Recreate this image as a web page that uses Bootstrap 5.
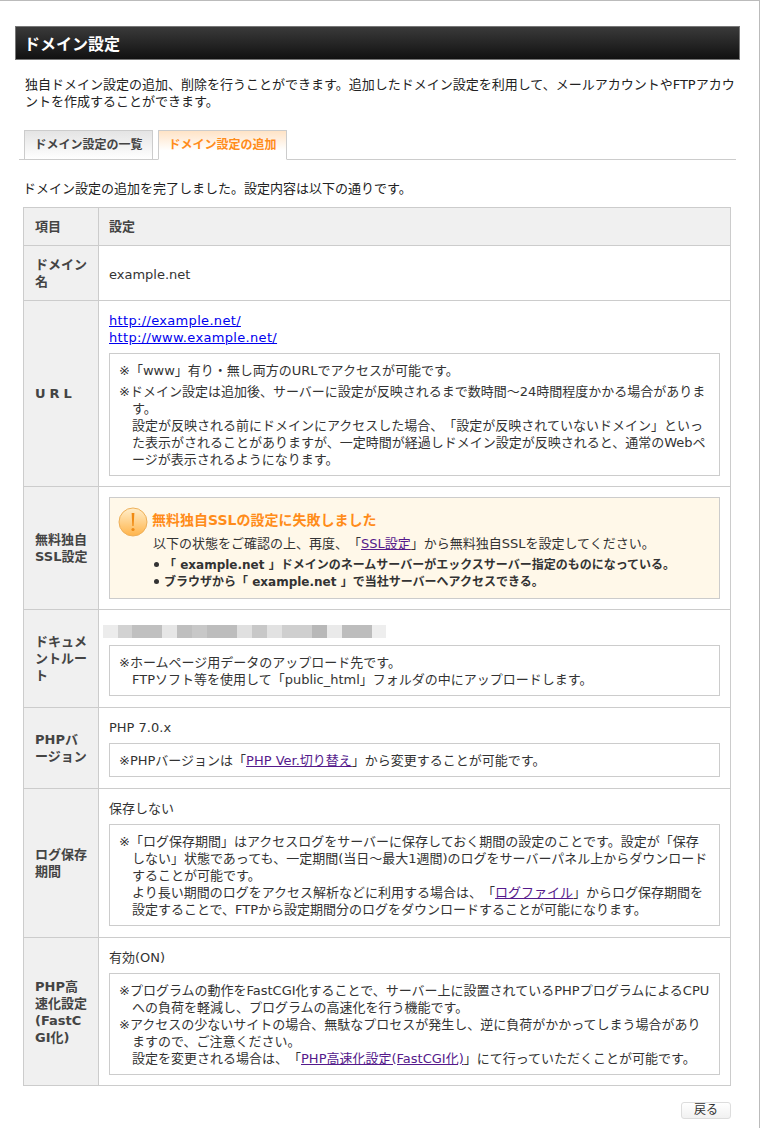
<!DOCTYPE html>
<html lang="ja">
<head>
    <meta charset="UTF-8">
    <title>ドメイン設定</title>
    <link href="https://cdn.jsdelivr.net/npm/bootstrap@5.3.3/dist/css/bootstrap.min.css" rel="stylesheet">
    <style>
        body { font-family: "DejaVu Sans", "Noto Sans CJK JP", sans-serif; font-size: 13px; line-height: 17px; color: #333; background: #fff; text-spacing-trim: space-all; }
        a { color: #00e; }
        a.visited { color: #551a8b; }
        a.url { letter-spacing: .33px; }
        .page { height: 1128px; border-top: 1px solid #bbb; border-right: 1px solid #bbb; padding: 25px 19px 0 15px; }
        .page-title { height: 34px; margin: 0; padding: 0 8px; font-size: 16px; line-height: 35px; font-weight: bold; color: #fff; border: 1px solid #777; background: linear-gradient(#3a3a3a, #111); }
        .intro { margin: 16px 0 0; padding: 0 4px 0 10px; color: #222; }
        .nav-tabs { margin: 20px 4px 0; padding-left: 5px; gap: 5px; border-bottom: 1px solid #ccc; --bs-nav-tabs-border-radius: 0; }
        .nav-tabs .nav-link { width: 129px; height: 30px; margin: 0 0 -1px; padding: 6px 0 0; text-align: center; font-size: 12px; font-weight: bold; color: #444; border: 1px solid #ccc; border-bottom-color: #ccc; background: linear-gradient(#e4e4e4, #fff); }
        .nav-tabs .nav-link.active { color: #ff8c1a; border-color: #ccc #ccc #fff; background: linear-gradient(#ffe3c6, #fff 70%); }
        .done { margin: 20px 0 10px 8px; color: #222; }
        .conf { width: 708px; margin: 0 0 0 8px; table-layout: fixed; --bs-table-border-color: #ccc; --bs-table-color: #333; border-color: #ccc; }
        .conf th { width: 75px; padding: 10px 10px 10px 11px; vertical-align: middle; font-weight: bold; color: #444; background: #f0f0f0; word-break: break-all; }
        .conf td { padding: 11px 10px 10px; vertical-align: middle; font-size: 13px; }
        .conf thead th, .conf thead td { height: 38px; background: #f0f0f0; font-weight: bold; color: #444; padding-top: 0; padding-bottom: 0; }
        .conf td.name-cell { padding-top: 13px; }
        .conf td.ssl-cell { padding-top: 10px; }
        .conf td.doc-cell, .conf td.php-cell, .conf td.log-cell { padding-bottom: 11px; }
        .spaced { letter-spacing: 4px; }
        .note { margin-top: 7px; padding: 8px 9px 7px; border: 1px solid #ccc; }
        .note p { margin: 0; padding-left: 13px; text-indent: -13px; }
        .note p + p.gap { margin-top: 4px; }
        .note p.cont { text-indent: 0; }
        .warn { padding: 9px 9px 7px 8px; background: #fff8e9; border: 1px solid #ccc; }
        .warn-icon { flex: none; width: 30px; height: 30px; }
        .warn-title { margin: 5px 0 0; font-size: 14px; line-height: 17px; font-weight: bold; color: #ff8c1a; }
        .warn-body { margin: -2px 0 0 35px; }
        .warn ul { margin: 5px 0 0 35px; padding: 0; list-style: none; font-size: 12px; font-weight: bold; }
        .warn li::before { content: ""; display: inline-block; width: 5px; height: 5px; margin: 0 5px 2px 1px; border-radius: 50%; background: #333; }
        .blur { width: 283px; height: 13px; margin: 4px 0 0 -6px; background: linear-gradient(90deg, #ececec 0 15px, #d2d2d2 15px 29px, #c0c0c0 29px 59px, #e6e6e6 59px 74px, #bfbfbf 74px 89px, #c8c8c8 89px 104px, #bdbdbd 104px 134px, #e0e0e0 134px 149px, #c8c8c8 149px 164px, #e2e2e2 164px 179px, #cfcfcf 179px 209px, #b8b8b8 209px 224px, #eaeaea 224px 239px, #bdbdbd 239px 269px, #eeeeee 269px 283px); }
        .back { margin: 15px 0 0 666px; }
        .back .btn { width: 50px; height: 17px; padding: 0; font-size: 12px; line-height: 15px; color: #333; background: linear-gradient(#fff, #f1f1f1); border: 1px solid #ddd; border-radius: 3px; }
    </style>
</head>
<body>
<div class="page">
    <h1 class="page-title">ドメイン設定</h1>
    <p class="intro">独自ドメイン設定の追加、削除を行うことができます。追加したドメイン設定を利用して、メールアカウントやFTPアカウントを作成することができます。</p>

    <ul class="nav nav-tabs">
        <li class="nav-item"><a class="nav-link" href="#">ドメイン設定の一覧</a></li>
        <li class="nav-item"><a class="nav-link active" href="#">ドメイン設定の追加</a></li>
    </ul>

    <p class="done">ドメイン設定の追加を完了しました。設定内容は以下の通りです。</p>

    <table class="table table-bordered conf">
        <thead>
        <tr><th>項目</th><td>設定</td></tr>
        </thead>
        <tbody>
        <tr>
            <th>ドメイン名</th>
            <td class="name-cell">example.net</td>
        </tr>
        <tr>
            <th class="spaced">URL</th>
            <td>
                <a class="url" href="#">http://example.net/</a><br>
                <a class="url" href="#">http://www.example.net/</a>
                <div class="note">
                    <p>※「www」有り・無し両方のURLでアクセスが可能です。</p>
                    <p class="gap">※ドメイン設定は追加後、サーバーに設定が反映されるまで数時間〜24時間程度かかる場合があります。</p>
                    <p class="cont">設定が反映される前にドメインにアクセスした場合、「設定が反映されていないドメイン」といった表示がされることがありますが、一定時間が経過しドメイン設定が反映されると、通常のWebページが表示されるようになります。</p>
                </div>
            </td>
        </tr>
        <tr>
            <th>無料独自SSL設定</th>
            <td class="ssl-cell">
                <div class="warn">
                    <div class="d-flex align-items-start gap-1">
                        <svg class="warn-icon" viewBox="0 0 30 30">
                            <defs><linearGradient id="wg" x1="0" y1="0" x2="0" y2="1"><stop offset="0" stop-color="#ffeecb"/><stop offset="1" stop-color="#ffb44a"/></linearGradient></defs>
                            <circle cx="15" cy="15" r="14" fill="url(#wg)" stroke="#eeb05a"/>
                            <path d="M13.6 6h2.8l-.8 13h-1.2z" fill="#f08a12"/>
                            <circle cx="15" cy="22.5" r="1.6" fill="#f08a12"/>
                        </svg>
                        <p class="warn-title">無料独自SSLの設定に失敗しました</p>
                    </div>
                    <p class="warn-body">以下の状態をご確認の上、再度、「<a class="visited" href="#">SSL設定</a>」から無料独自SSLを設定してください。</p>
                    <ul>
                        <li>「 example.net 」ドメインのネームサーバーがエックスサーバー指定のものになっている。</li>
                        <li>ブラウザから「 example.net 」で当社サーバーへアクセスできる。</li>
                    </ul>
                </div>
            </td>
        </tr>
        <tr>
            <th>ドキュメントルート</th>
            <td class="doc-cell">
                <div class="blur"></div>
                <div class="note">
                    <p>※ホームページ用データのアップロード先です。</p>
                    <p class="cont">FTPソフト等を使用して「public_html」フォルダの中にアップロードします。</p>
                </div>
            </td>
        </tr>
        <tr>
            <th>PHPバージョン</th>
            <td class="php-cell">
                PHP 7.0.x
                <div class="note">
                    <p>※PHPバージョンは「<a class="visited" href="#">PHP Ver.切り替え</a>」から変更することが可能です。</p>
                </div>
            </td>
        </tr>
        <tr>
            <th>ログ保存期間</th>
            <td class="log-cell">
                保存しない
                <div class="note">
                    <p>※「ログ保存期間」はアクセスログをサーバーに保存しておく期間の設定のことです。設定が「保存しない」状態であっても、一定期間(当日〜最大1週間)のログをサーバーパネル上からダウンロードすることが可能です。</p>
                    <p class="cont">より長い期間のログをアクセス解析などに利用する場合は、「<a class="visited" href="#">ログファイル</a>」からログ保存期間を設定することで、FTPから設定期間分のログをダウンロードすることが可能になります。</p>
                </div>
            </td>
        </tr>
        <tr>
            <th>PHP高速化設定(FastCGI化)</th>
            <td>
                有効(ON)
                <div class="note">
                    <p>※プログラムの動作をFastCGI化することで、サーバー上に設置されているPHPプログラムによるCPUへの負荷を軽減し、プログラムの高速化を行う機能です。</p>
                    <p>※アクセスの少ないサイトの場合、無駄なプロセスが発生し、逆に負荷がかかってしまう場合がありますので、ご注意ください。</p>
                    <p class="cont">設定を変更される場合は、「<a class="visited" href="#">PHP高速化設定(FastCGI化)</a>」にて行っていただくことが可能です。</p>
                </div>
            </td>
        </tr>
        </tbody>
    </table>

    <div class="back"><button type="button" class="btn">戻る</button></div>
</div>
<script src="https://cdn.jsdelivr.net/npm/bootstrap@5.3.3/dist/js/bootstrap.bundle.min.js"></script>
</body>
</html>
